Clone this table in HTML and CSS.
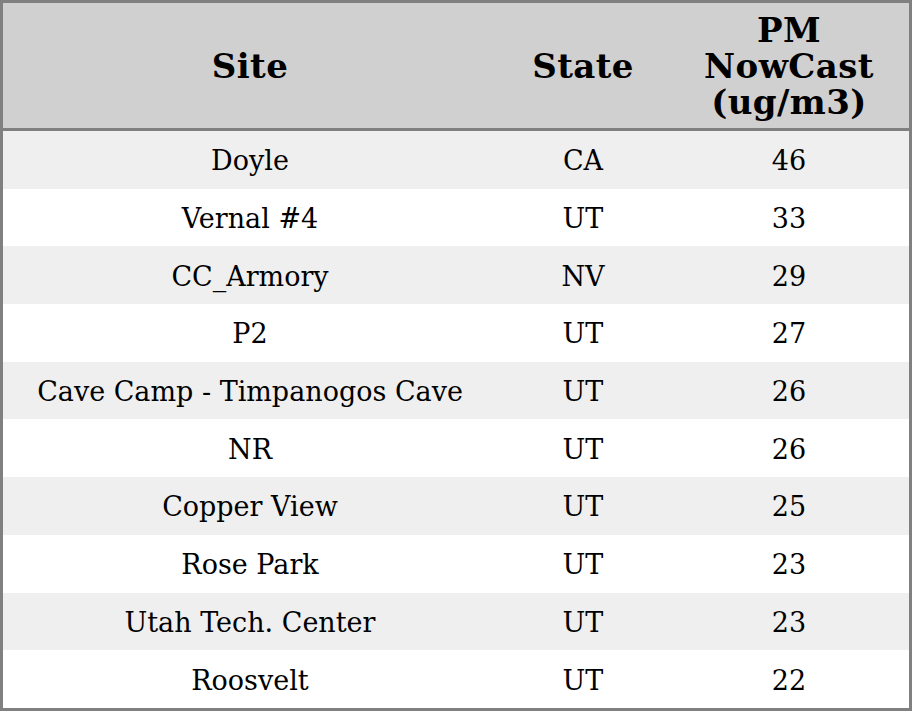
FILE: index.html
```html
<!DOCTYPE html>
<html>
<head>
<meta charset="utf-8">
<link rel="stylesheet" href="styles.css">
</head>
<body>
<table class="aq">
  <colgroup>
    <col class="c-site">
    <col class="c-state">
    <col class="c-pm">
  </colgroup>
  <thead>
    <tr><th>Site</th><th>State</th><th>PM<br>NowCast<br>(ug/m3)</th></tr>
  </thead>
  <tbody>
    <tr><td>Doyle</td><td>CA</td><td>46</td></tr>
    <tr><td>Vernal #4</td><td>UT</td><td>33</td></tr>
    <tr><td>CC_Armory</td><td>NV</td><td>29</td></tr>
    <tr><td>P2</td><td>UT</td><td>27</td></tr>
    <tr><td>Cave Camp - Timpanogos Cave</td><td>UT</td><td>26</td></tr>
    <tr><td>NR</td><td>UT</td><td>26</td></tr>
    <tr><td>Copper View</td><td>UT</td><td>25</td></tr>
    <tr><td>Rose Park</td><td>UT</td><td>23</td></tr>
    <tr><td>Utah Tech. Center</td><td>UT</td><td>23</td></tr>
    <tr><td>Roosvelt</td><td>UT</td><td>22</td></tr>
  </tbody>
</table>
</body>
</html>
```
FILE: styles.css
```css
html, body {
  margin: 0;
  padding: 0;
  background: #ffffff;
}
.aq {
  width: 912px;
  height: 711px;
  table-layout: fixed;
  border-collapse: separate;
  border-spacing: 0;
  border: 3px solid #808080;
  font-family: "DejaVu Serif", serif;
  color: #000;
}
.c-site { width: 494px; }
.c-state { width: 172px; }
.c-pm { width: 240px; }
.aq th {
  height: 125px;
  padding: 0;
  background: #d0d0d0;
  border-bottom: 3px solid #808080;
  font-size: 34px;
  line-height: 36px;
  letter-spacing: 0.4px;
  font-weight: bold;
  text-align: center;
  vertical-align: middle;
}
.aq td {
  height: 55.7px;
  padding: 2px 0 0;
  font-size: 27px;
  line-height: 31px;
  text-align: center;
  vertical-align: middle;
}
.aq tbody tr:nth-child(odd) td {
  background: #efefef;
}
```
